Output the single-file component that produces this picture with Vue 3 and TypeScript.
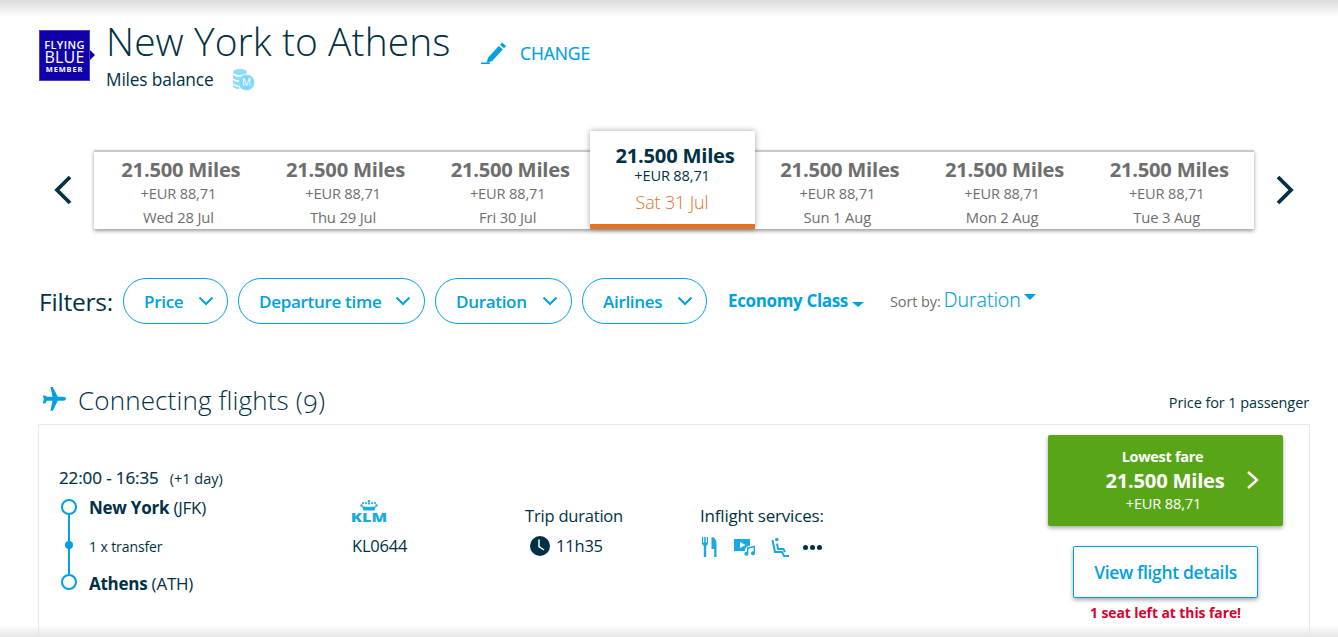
<script setup lang="ts">
interface Day { date: string; active?: boolean }
const days: Day[] = [
  { date: 'Wed 28 Jul' },
  { date: 'Thu 29 Jul' },
  { date: 'Fri 30 Jul' },
  { date: 'Sat 31 Jul', active: true },
  { date: 'Sun 1 Aug' },
  { date: 'Mon 2 Aug' },
  { date: 'Tue 3 Aug' },
]
const filters = ['Price', 'Departure time', 'Duration', 'Airlines']
</script>

<template>
  <div class="page">
    <div class="shade-top"></div>
    <header class="head">
      <div class="logo">
        <span class="l1">FLYING</span><span class="l2">BLUE</span><span class="l3">MEMBER</span>
      </div>
      <div class="head-text">
        <h1>New York to Athens</h1>
        <div class="balance">
          <span>Miles balance</span>
          <svg class="coins" width="23" height="22" viewBox="0 0 23 22">
            <g fill="#8fdcff">
              <path d="M1 3c0-1.600 3-3 7-3s7 1.400 7 3-3 3-7 3-7-1.400-7-3z" />
              <path d="M1 5.500c1 1.500 4 2.300 7 2.300s6-.8 7-2.300V9c-1 1.500-4 2.300-7 2.300S2 10.500 1 9z" />
              <path d="M1 10.800c1 1.500 4 2.300 7 2.300h1l-1 3.700c-3 0-6-1-7-2.500z" />
              <path d="M1 15.800c1 1.200 3 1.900 6 2l.5 2.200C4 20 1 18.800 1 17.500z" />
              <circle cx="14.500" cy="13.500" r="8" />
            </g>
            <circle cx="14.500" cy="13.500" r="6.800" fill="#7fd6fb" />
            <text x="14.500" y="17" text-anchor="middle" class="coin-m">M</text>
          </svg>
        </div>
      </div>
      <a class="change">
        <svg width="26" height="24" viewBox="0 0 26 24">
          <path fill="#00a1de" d="M21 1.500l4 3.500-2 2.200-4-3.500zM17.800 5l4 3.500-10.600 11.500-5.700 2 1.700-5.600z" />
          <rect x="0" y="21.500" width="9" height="1.500" fill="#00a1de" />
        </svg>
        <span>CHANGE</span>
      </a>
    </header>

    <section class="dates">
      <button class="arrow">
        <svg width="20" height="30" viewBox="0 0 20 30"><path d="M17 2 4 15l13 13" fill="none" stroke="#003145" stroke-width="3.800" /></svg>
      </button>
      <div class="strip">
        <div v-for="d in days" :key="d.date" class="day" :class="{ active: d.active }">
          <div class="miles">21.500 Miles</div>
          <div class="eur">+EUR 88,71</div>
          <div class="date">{{ d.date }}</div>
        </div>
      </div>
      <button class="arrow">
        <svg width="20" height="30" viewBox="0 0 20 30"><path d="M3 2l13 13L3 28" fill="none" stroke="#003145" stroke-width="3.800" /></svg>
      </button>
    </section>

    <section class="filters">
      <span class="f-label">Filters:</span>
      <button v-for="f in filters" :key="f" class="pill">
        <span>{{ f }}</span>
        <svg width="16" height="10" viewBox="0 0 16 10"><path d="M1.500 1.500 8 8l6.500-6.500" fill="none" stroke="#00a1de" stroke-width="2" /></svg>
      </button>
      <span class="cabin">Economy Class<i class="caret small"></i></span>
      <span class="sort">
        <span class="sort-l">Sort by:</span>
        <span class="sort-v">Duration</span><i class="caret"></i>
      </span>
    </section>

    <section class="sec-head">
      <svg class="plane" width="24" height="24" viewBox="0 0 24 24">
        <path fill="#00a1de" d="M8.500 0h2.300l5 9.800h5.200c1.700 0 3 .9 3 2s-1.300 2-3 2h-5.200l-5 10H8.500l2-10H5l-2 2.600H.800L1.900 11.800.8 8.500H3L5 9.800h5.500z" />
      </svg>
      <h2>Connecting flights (<span class="osf">9</span>)</h2>
      <span class="pax">Price for 1 passenger</span>
    </section>

    <article class="card">
      <div class="route">
        <div class="times">22:00 - 16:35<small>(+1 day)</small></div>
        <div class="stops">
          <div class="rail"><i class="ring"></i><i class="line"></i><i class="dot"></i><i class="line"></i><i class="ring"></i></div>
          <div class="names">
            <div><b>New York</b> (JFK)</div>
            <div class="transfer">1 x transfer</div>
            <div><b>Athens</b> (ATH)</div>
          </div>
        </div>
      </div>
      <div class="carrier">
        <svg class="crown" width="34" height="11" viewBox="0 0 34 11">
          <g fill="#1aa9e2">
            <circle cx="17" cy="1.200" r="1.200" />
            <circle cx="11" cy="3" r="1.100" /><circle cx="14" cy="3" r="1.100" /><circle cx="17" cy="3.500" r="1.100" /><circle cx="20" cy="3" r="1.100" /><circle cx="23" cy="3" r="1.100" />
            <circle cx="9.500" cy="5.500" r="1.200" /><circle cx="24.500" cy="5.500" r="1.200" />
            <path d="M10 6c4 1.200 10 1.200 14 0l-1.500 4.500h-11z" />
          </g>
        </svg>
        <div class="klm">KLM</div>
        <div class="flight">KL0644</div>
      </div>
      <div class="trip">
        <div>Trip duration</div>
        <div class="dur">
          <svg width="20" height="20" viewBox="0 0 20 20">
            <circle cx="10" cy="10" r="10" fill="#003145" />
            <path d="M9 3.500v7l5 3.500" fill="none" stroke="#fff" stroke-width="1.500" />
          </svg>
          <span>11h35</span>
        </div>
      </div>
      <div class="services">
        <div>Inflight services:</div>
        <div class="svc-icons">
          <svg width="15" height="20" viewBox="0 0 15 20">
            <path fill="#1aa9e2" d="M0 0h1.200v5.500h1V0h1.600v5.500h1V0H6v7L4.200 9v11H1.800V9L0 7zM10 0c2.500 0 4.500 3 4.500 6.500V20h-2.300v-8H9.500V4c0-2 0-4 .5-4z" />
          </svg>
          <svg width="22" height="20" viewBox="0 0 22 20">
            <path fill="#1aa9e2" d="M0 2h16v6.500c-3 .5-5 2.300-5.300 5.500H0zM6 5v6l5.500-3z" />
            <path fill="#1aa9e2" d="M13 10.500l8-2v7.800a2 2 0 1 1-1.400-1.900v-3.900l-5.200 1.300v5a2 2 0 1 1-1.400-1.900z" />
          </svg>
          <svg width="18" height="20" viewBox="0 0 18 20">
            <circle cx="5.800" cy="2.500" r="1.800" fill="#1aa9e2" />
            <path fill="none" stroke="#1aa9e2" stroke-width="2" d="M1.500 3 4 15h7l2 4h5" />
            <path fill="none" stroke="#1aa9e2" stroke-width="2" d="M6 6.500 7 12h5.500l1.500 3" />
          </svg>
          <span class="dots"><i></i><i></i><i></i></span>
        </div>
      </div>
      <div class="fare">
        <button class="lowest">
          <span class="lf">Lowest fare</span>
          <span class="lm">21.500 Miles</span>
          <span class="le">+EUR 88,71</span>
          <svg class="go" width="14" height="20" viewBox="0 0 14 20"><path d="M2 2l9 8-9 8" fill="none" stroke="#fff" stroke-width="2.500" /></svg>
        </button>
        <button class="details">View flight details</button>
        <div class="seat">1 seat left at this fare!</div>
      </div>
    </article>
    <div class="shade-bottom"></div>
  </div>
</template>

<style>
html, body { margin: 0; background: #fff; overflow: hidden; }
</style>

<style scoped>
.page {
  position: relative;
  width: 1338px;
  height: 637px;
  overflow: hidden;
  background: #fff;
  color: #003145;
  font-family: "Open Sans", "Noto Sans", sans-serif;
  font-size: 16px;
}
.shade-top {
  position: absolute; left: 0; right: 0; top: 0; height: 17px;
  background: linear-gradient(#dcdcdc, #fff);
}
.shade-bottom {
  position: absolute; left: 0; right: 0; bottom: 0; height: 12px;
  background: linear-gradient(rgba(235,235,235,0), #e6e6e6);
}
button { font-family: inherit; background: none; border: 0; padding: 0; cursor: pointer; }

.head { display: flex; align-items: flex-start; padding: 30px 0 0 39px; height: 91px; box-sizing: border-box; }
.logo {
  width: 51px; height: 51px; margin-right: 16px; background: #1000a8; color: #fff; position: relative;
  display: flex; flex-direction: column; align-items: center; justify-content: center; line-height: 1;
  border: 1px solid #4a3fc4; box-sizing: border-box; padding-top: 1px;
}
.logo::after {
  content: ""; position: absolute; right: -6px; top: 19px;
  border-left: 5px solid #1000a8; border-top: 5px solid transparent; border-bottom: 5px solid transparent;
}
.l1 { font-size: 11px; letter-spacing: .4px; font-weight: 600; }
.l2 { font-size: 16px; line-height: 14px; letter-spacing: .2px; }
.l3 { font-size: 7.500px; letter-spacing: .8px; font-weight: 700; margin-top: 2px; }
.head-text { width: 375px; margin-top: -14px; }
h1 { margin: 0; font-size: 38.900px; font-weight: 300; line-height: 50px; white-space: nowrap; letter-spacing: .1px; }
.balance { display: flex; align-items: flex-start; margin-top: 3px; font-size: 17.300px; line-height: 22px; letter-spacing: -.15px; }
.coins { margin: 0 0 0 19px; }
.coin-m { font: 10px "Open Sans", sans-serif; fill: #fff; }
.change { display: flex; align-items: center; gap: 13px; margin-top: 11px; color: #00a1de; font-size: 17.500px; letter-spacing: -.1px; line-height: 24px; -webkit-text-stroke: .2px #00a1de; }

.dates { display: flex; align-items: center; padding: 40px 0 0 53px; height: 98px; }
.arrow { width: 20px; height: 30px; display: block; margin-top: 20px; }
.strip {
  margin: 19px 21px 0 21px; width: 1160px; height: 79px; display: flex; box-sizing: border-box;
  padding: 0 2.500px 0 4.500px;
  background: #fff; border-top: 2px solid #c9c9c9; box-shadow: 0 2px 4px rgba(0,0,0,.4);
}
.day { flex: 1; text-align: center; color: #6e6e6e; padding-top: 4px; position: relative; }
.miles { font-weight: 700; font-size: 20.200px; line-height: 27px; letter-spacing: -.25px; }
.eur { font-size: 14.600px; line-height: 19px; margin-top: 1px; letter-spacing: -.15px; padding-right: 5px; }
.date { font-size: 14.800px; line-height: 19px; margin-top: 5px; letter-spacing: -.15px; padding-right: 5px; }
.day.active {
  flex: none; width: 165px; margin: -21px 3px 0 -3px; height: 98px; padding: 11px 0 0 6px; box-sizing: border-box; background: #fff;
  color: #003145; border-bottom: 5px solid #e37222;
  box-shadow: 0 0 6px rgba(0,0,0,.35); z-index: 1;
}
.day.active .eur { margin-top: -3px; padding-right: 6px; }
.day.active .date { color: #e37222; font-size: 18px; line-height: 24px; margin-top: 5px; font-weight: 300; padding-right: 6px; }

.filters { display: flex; align-items: flex-start; padding: 49px 0 0 39px; height: 46px; }
.f-label { font-size: 24.500px; line-height: 30px; margin-top: 9px; width: 84px; flex: none; letter-spacing: -.2px; white-space: nowrap; }
.pill {
  height: 46px; box-sizing: border-box; border: 1px solid #00a1de; border-radius: 23px; margin-right: 10px;
  padding: 0 13px 0 20px; display: flex; align-items: center; justify-content: space-between; color: #00a1de;
  font-size: 17px; font-weight: 600; letter-spacing: -.3px; white-space: nowrap;
}
.pill:nth-of-type(1) { width: 105px; }
.pill:nth-of-type(2) { width: 187px; }
.pill:nth-of-type(3) { width: 137px; }
.pill:nth-of-type(4) { width: 125px; }
.cabin { color: #00a1de; font-size: 17px; font-weight: 700; letter-spacing: -.35px; line-height: 22px; margin: 12px 0 0 11px; white-space: nowrap; width: 137px; flex: none; }
.caret { display: inline-block; border-top: 6px solid #00a1de; border-left: 6px solid transparent; border-right: 6px solid transparent; vertical-align: 3px; }
.caret.small { border-top-width: 5px; margin-left: 4px; vertical-align: 0; }
.sort { margin: 9px 0 0 25px; white-space: nowrap; display: flex; align-items: flex-start; }
.sort-l { font-size: 14.500px; color: #6e6e6e; margin: 5px 3px 0 0; letter-spacing: -.1px; line-height: 19px; }
.sort-v { font-size: 19.500px; color: #00a1de; line-height: 26px; font-weight: 300; -webkit-text-stroke: .2px #00a1de; }
.sort .caret { margin: 7px 0 0 3px; }

.sec-head { display: flex; align-items: flex-start; padding: 63px 29px 0 42px; height: 37px; box-sizing: content-box; }
.plane { margin-right: 12px; }
h2 { margin: -2px 0 0; font-size: 26px; font-weight: 300; line-height: 30px; flex: 1; letter-spacing: .15px; }
.osf { display: inline-block; transform: translateY(3px); }
.pax { font-size: 14.500px; line-height: 19px; margin-top: 6px; letter-spacing: -.1px; }

.card {
  margin-left: 38px; width: 1272px; height: 260px; box-sizing: border-box;
  border: 1px solid #e8e8e8; background: #fff; display: flex; align-items: flex-start;
}
.route { width: 293px; margin-left: 20px; padding-top: 42px; box-sizing: border-box; }
.times { font-size: 17px; line-height: 22px; letter-spacing: -.1px; -webkit-text-stroke: .2px #003145; white-space: nowrap; }
.times small { font-size: 14.500px; margin-left: 11px; letter-spacing: 0; -webkit-text-stroke: 0; }
.stops { display: flex; margin-top: 7px; }
.rail { width: 30px; display: flex; flex-direction: column; align-items: center; margin: 2px 0 0 -5px; height: 91px; }
.ring { width: 16px; height: 16px; box-sizing: border-box; border: 2.500px solid #00a1de; border-radius: 50%; flex: none; }
.line { width: 2.500px; flex: 1; background: #00a1de; }
.dot { width: 8px; height: 8px; background: #00a1de; border-radius: 50%; flex: none; margin: -3px 0; z-index: 1; }
.names { margin-left: 5px; font-size: 17px; line-height: 22px; letter-spacing: -.25px; white-space: nowrap; }
.names b { font-weight: 700; }
.transfer { font-size: 14px; line-height: 19px; margin: 18px 0 17px; letter-spacing: -.1px; }
.carrier { width: 173px; padding-top: 75px; box-sizing: border-box; }
.crown { display: block; margin-bottom: 2px; }
.klm {
  color: #1aa9e2; font-size: 12.500px; line-height: 9px; font-weight: 800; width: 34px; text-align: center;
  transform: scaleX(1.300);
}
.flight { font-size: 16.500px; line-height: 22px; margin-top: 13px; letter-spacing: -.2px; }
.trip { width: 175px; padding-top: 80px; box-sizing: border-box; line-height: 22px; font-size: 16.500px; letter-spacing: -.2px; }
.dur { display: flex; align-items: center; gap: 6px; margin: 8px 0 0 5px; }
.services { flex: 1; padding-top: 80px; box-sizing: border-box; font-size: 17px; line-height: 22px; letter-spacing: -.2px; white-space: nowrap; }
.svc-icons { display: flex; align-items: center; margin: 10px 0 0 2px; }
.svc-icons svg:nth-child(1) { margin-right: 17px; }
.svc-icons svg:nth-child(2) { margin-right: 15px; }
.svc-icons svg:nth-child(3) { margin-right: 14px; }
.dots { display: flex; gap: 2px; }
.dots i { width: 5px; height: 5px; border-radius: 50%; background: #003145; display: block; }
.fare { width: 235px; margin-right: 26px; padding-top: 10px; display: flex; flex-direction: column; align-items: center; }
.lowest {
  position: relative; width: 235px; height: 91px; background: #58a618; border-radius: 2px; color: #fff;
  display: flex; flex-direction: column; align-items: center; padding-top: 12px; box-sizing: border-box;
  box-shadow: 0 2px 4px rgba(0,0,0,.35);
}
.lf { font-size: 14.500px; font-weight: 700; line-height: 20px; letter-spacing: -.3px; margin-left: -6px; }
.lm { font-size: 20.200px; font-weight: 700; line-height: 27px; letter-spacing: -.25px; margin: 0 0 0 -1px; }
.le { font-size: 14.600px; line-height: 19px; margin-top: 0; letter-spacing: -.15px; margin-left: -4px; }
.go { position: absolute; right: 23px; top: 35px; }
.details {
  width: 185px; height: 52px; margin-top: 20px; background: #fff; border: 1px solid #00a1de; border-radius: 2px;
  color: #00a1de; font-size: 17.400px; font-weight: 600; letter-spacing: -.3px; box-shadow: 0 2px 4px rgba(0,0,0,.35); white-space: nowrap;
}
.seat { color: #d9002e; font-size: 13.900px; font-weight: 700; line-height: 19px; margin-top: 5px; letter-spacing: -.05px; white-space: nowrap; }
</style>
